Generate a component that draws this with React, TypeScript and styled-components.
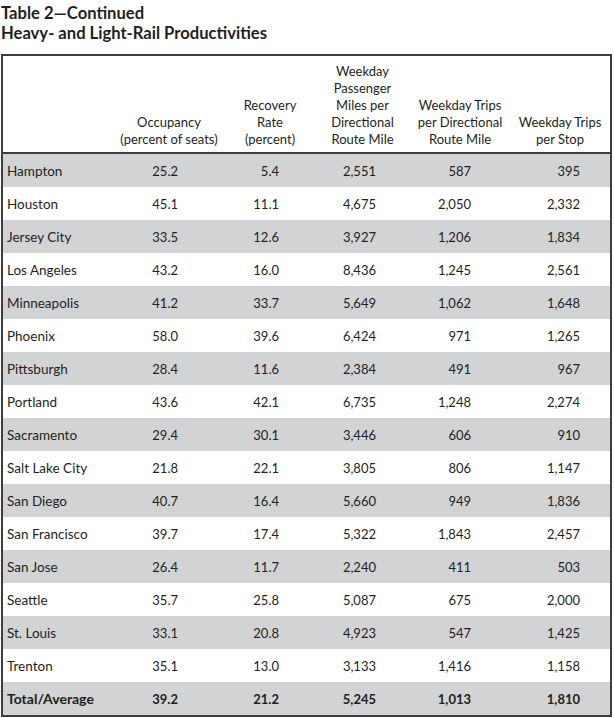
import React from "react";
import styled, { createGlobalStyle } from "styled-components";

const Global = createGlobalStyle`
  html, body { margin: 0; padding: 0; background: #ffffff; }
  body { font-family: Lato, "Open Sans", sans-serif; color: #231f20; }
`;

const Page = styled.div`
  width: 614px;
  padding: 3px 0 0 1px;
  box-sizing: border-box;
`;

const Title = styled.h1`
  margin: 0 0 11px 0;
  font-size: 16.6px;
  line-height: 20px;
  font-weight: 700;
`;

const Table = styled.div`
  width: 611px;
  box-sizing: border-box;
  border: 2px solid #3d3d3d;
`;

const COLS = "110px 112px 90px 95px 100px 100px";

const HeaderRow = styled.div`
  display: grid;
  grid-template-columns: ${COLS};
  height: 96px;
  border-bottom: 2px solid #3d3d3d;
  align-items: end;
`;

const HeadCell = styled.div`
  text-align: center;
  font-size: 13px;
  line-height: 17px;
  padding-bottom: 4px;
  white-space: pre-line;
`;

const Row = styled.div<{ $shade: boolean; $bold?: boolean }>`
  display: grid;
  grid-template-columns: ${COLS};
  height: 33px;
  align-items: center;
  background: ${(p) => (p.$shade ? "#d1d3d4" : "#ffffff")};
  font-size: 13px;
  font-weight: ${(p) => (p.$bold ? 700 : 400)};
`;

const NameCell = styled.div<{ $bold?: boolean }>`
  padding-left: 4px;
  font-size: ${(p) => (p.$bold ? "14px" : "13.5px")};
`;

const NumCell = styled.div<{ $pr: number }>`
  text-align: right;
  padding-right: ${(p) => p.$pr}px;
`;

const PAD = [47, 36, 34, 39, 30];

const headers = [
  "",
  "Occupancy\n(percent of seats)",
  "Recovery\nRate\n(percent)",
  "Weekday\nPassenger\nMiles per\nDirectional\nRoute Mile",
  "Weekday Trips\nper Directional\nRoute Mile",
  "Weekday Trips\nper Stop",
];

const rows: [string, string, string, string, string, string][] = [
  ["Hampton", "25.2", "5.4", "2,551", "587", "395"],
  ["Houston", "45.1", "11.1", "4,675", "2,050", "2,332"],
  ["Jersey City", "33.5", "12.6", "3,927", "1,206", "1,834"],
  ["Los Angeles", "43.2", "16.0", "8,436", "1,245", "2,561"],
  ["Minneapolis", "41.2", "33.7", "5,649", "1,062", "1,648"],
  ["Phoenix", "58.0", "39.6", "6,424", "971", "1,265"],
  ["Pittsburgh", "28.4", "11.6", "2,384", "491", "967"],
  ["Portland", "43.6", "42.1", "6,735", "1,248", "2,274"],
  ["Sacramento", "29.4", "30.1", "3,446", "606", "910"],
  ["Salt Lake City", "21.8", "22.1", "3,805", "806", "1,147"],
  ["San Diego", "40.7", "16.4", "5,660", "949", "1,836"],
  ["San Francisco", "39.7", "17.4", "5,322", "1,843", "2,457"],
  ["San Jose", "26.4", "11.7", "2,240", "411", "503"],
  ["Seattle", "35.7", "25.8", "5,087", "675", "2,000"],
  ["St. Louis", "33.1", "20.8", "4,923", "547", "1,425"],
  ["Trenton", "35.1", "13.0", "3,133", "1,416", "1,158"],
  ["Total/Average", "39.2", "21.2", "5,245", "1,013", "1,810"],
];

export default function App() {
  return (
    <>
      <Global />
      <Page>
        <Title>
          Table 2—Continued
          <br />
          Heavy- and Light-Rail Productivities
        </Title>
        <Table>
          <HeaderRow>
            {headers.map((h, i) => (
              <HeadCell key={i}>{h}</HeadCell>
            ))}
          </HeaderRow>
          {rows.map((r, i) => {
            const bold = i === rows.length - 1;
            return (
              <Row key={r[0]} $shade={i % 2 === 0} $bold={bold}>
                <NameCell $bold={bold}>{r[0]}</NameCell>
                {r.slice(1).map((v, j) => (
                  <NumCell key={j} $pr={PAD[j]}>
                    {v}
                  </NumCell>
                ))}
              </Row>
            );
          })}
        </Table>
      </Page>
    </>
  );
}
